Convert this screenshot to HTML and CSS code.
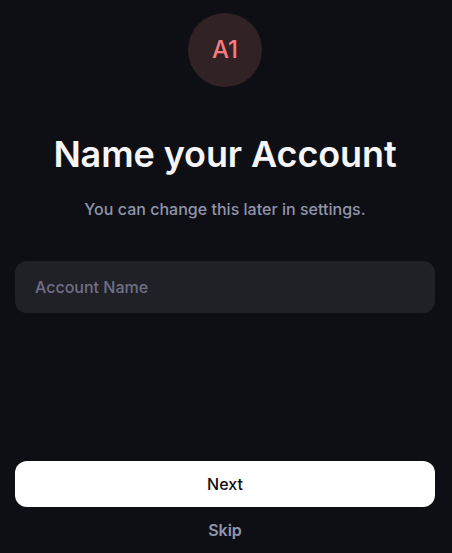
FILE: index.html
```html
<!DOCTYPE html>
<html lang="en">
<head>
<meta charset="utf-8">
<title>Name your Account</title>
<link rel="stylesheet" href="styles.css">
</head>
<body>
<main class="screen">
  <div class="avatar">A1</div>
  <h1 class="title">Name your Account</h1>
  <p class="subtitle">You can change this later in settings.</p>
  <input class="field" type="text" placeholder="Account Name" aria-label="Account Name">
  <div class="actions">
    <button class="next" type="button">Next</button>
    <button class="skip" type="button">Skip</button>
  </div>
</main>
</body>
</html>
```
FILE: styles.css
```css
* { box-sizing: border-box; }
body {
  margin: 0;
  background: #0e0f14;
  font-family: Inter, "Liberation Sans", sans-serif;
  font-weight: 500;
}
.screen {
  display: flex;
  flex-direction: column;
  align-items: center;
  width: 450px;
  height: 553px;
  padding: 13px 15px 0;
}
.avatar {
  display: flex;
  align-items: center;
  justify-content: center;
  width: 74px;
  height: 74px;
  padding-bottom: 2px;
  border-radius: 50%;
  background: #312226;
  color: #f87c7e;
  font-size: 24px;
}
.title {
  margin: 43px 0 0;
  color: #f6f6f8;
  font-size: 36px;
  font-weight: 600;
  letter-spacing: -0.1px;
  line-height: 48px;
  white-space: nowrap;
}
.subtitle {
  margin: 19px 0 0;
  color: #9095ac;
  font-size: 16px;
  letter-spacing: 0.02px;
  line-height: 24px;
}
.field {
  width: 100%;
  height: 52px;
  margin-top: 40px;
  padding: 0 20px;
  border: 0;
  border-radius: 12px;
  background: #202126;
  color: #fafafa;
  font: inherit;
  font-size: 16px;
}
.field::placeholder { color: #6f7086; }
.actions {
  display: flex;
  flex-direction: column;
  width: 100%;
  margin-top: 148px;
}
.next, .skip {
  height: 46px;
  padding: 0;
  border: 0;
  border-radius: 12px;
  font: inherit;
  font-size: 16px;
}
.next { background: #fff; color: #0e0f14; }
.skip { background: transparent; color: #9095b0; font-weight: 600; }
```
